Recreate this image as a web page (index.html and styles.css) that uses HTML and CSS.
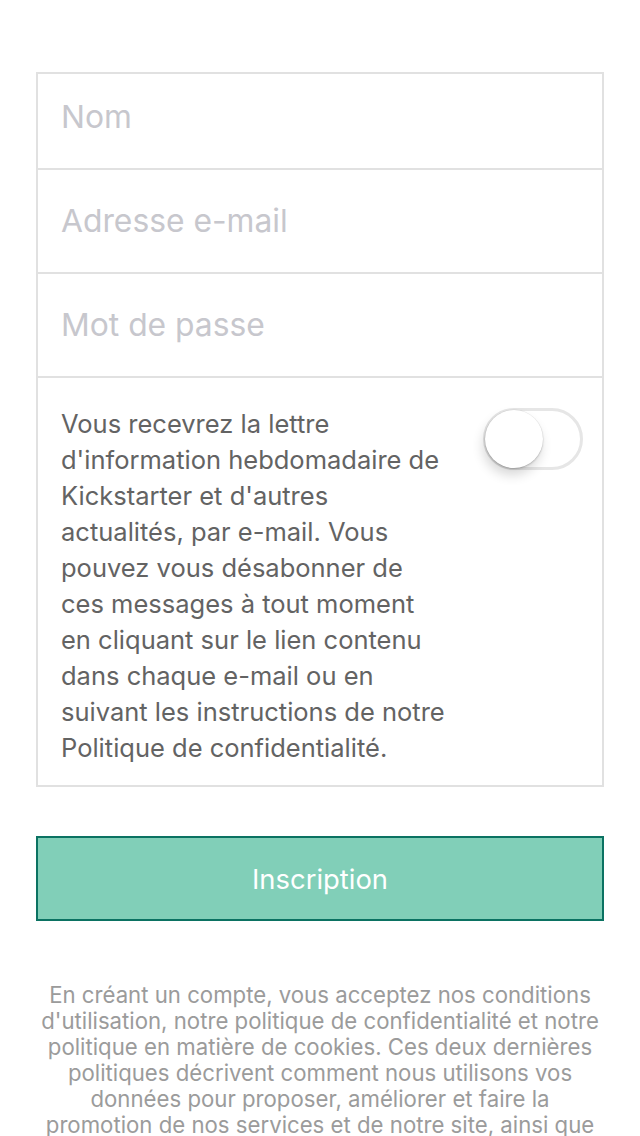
FILE: index.html
```html
<!DOCTYPE html>
<html lang="fr">
<head>
<meta charset="utf-8">
<title>Inscription</title>
<link rel="stylesheet" href="styles.css">
</head>
<body>
<main class="page">
  <form class="form-box">
    <div class="field field-first"><span class="placeholder">Nom</span></div>
    <div class="field"><span class="placeholder">Adresse e-mail</span></div>
    <div class="field"><span class="placeholder">Mot de passe</span></div>
    <div class="newsletter">
      <p class="newsletter-text">Vous recevrez la lettre<br>d'information hebdomadaire de<br>Kickstarter et d'autres<br>actualités, par e-mail. Vous<br>pouvez vous désabonner de<br>ces messages à tout moment<br>en cliquant sur le lien contenu<br>dans chaque e-mail ou en<br>suivant les instructions de notre<br>Politique de confidentialité.</p>
      <div class="switch"><div class="knob"></div></div>
    </div>
  </form>
  <button class="submit" type="button">Inscription</button>
  <p class="legal">En créant un compte, vous acceptez nos conditions<br>d'utilisation, notre politique de confidentialité et notre<br>politique en matière de cookies. Ces deux dernières<br>politiques décrivent comment nous utilisons vos<br>données pour proposer, améliorer et faire la<br>promotion de nos services et de notre site, ainsi que</p>
</main>
</body>
</html>
```

FILE: styles.css
```css
html, body {
  margin: 0;
  padding: 0;
  background: #ffffff;
  height: 1136px;
  overflow: hidden;
}
body {
  font-family: Inter, "Noto Sans", "Liberation Sans", sans-serif;
}
.page {
  padding: 72px 36px 0 36px;
  display: flex;
  flex-direction: column;
}
.form-box {
  border: 2px solid #e1e1e1;
  display: flex;
  flex-direction: column;
  margin: 0;
}
.field {
  height: 102px;
  box-sizing: content-box;
  border-bottom: 2px solid #e1e1e1;
  display: flex;
  align-items: center;
  padding-left: 23px;
}
.field-first {
  height: 86px;
  padding-bottom: 8px;
}
.placeholder {
  font-size: 31.8px;
  color: #c7c7cd;
  position: relative;
  top: -1px;
}
.newsletter {
  display: flex;
  justify-content: space-between;
  align-items: flex-start;
  padding: 28px 19px 19px 23px;
}
.newsletter-text {
  margin: 0;
  white-space: nowrap;
  font-size: 25.5px;
  line-height: 36px;
  color: #636363;
}
.switch {
  position: relative;
  margin-top: 2px;
  width: 100px;
  height: 62px;
  flex: none;
  box-sizing: border-box;
  border: 3px solid #e6e6e6;
  border-radius: 31px;
  background: #fff;
}
.knob {
  position: absolute;
  left: -1px;
  top: -1px;
  width: 58px;
  height: 58px;
  border-radius: 50%;
  background: #fff;
  box-shadow: -2px 7px 12px rgba(0,0,0,0.16), 0 1px 2px rgba(0,0,0,0.2), 0 0 0 0.5px rgba(0,0,0,0.06);
}
.submit {
  margin-top: 49px;
  height: 85px;
  border: 2px solid #0b7262;
  background: #81cfb8;
  color: #ffffff;
  font-family: inherit;
  font-size: 27.4px;
  padding: 0;
}
.legal {
  margin: 61px -4px 0 -4px;
  white-space: nowrap;
  text-align: center;
  font-size: 22.2px;
  line-height: 26px;
  color: #9b9b9b;
}
```
